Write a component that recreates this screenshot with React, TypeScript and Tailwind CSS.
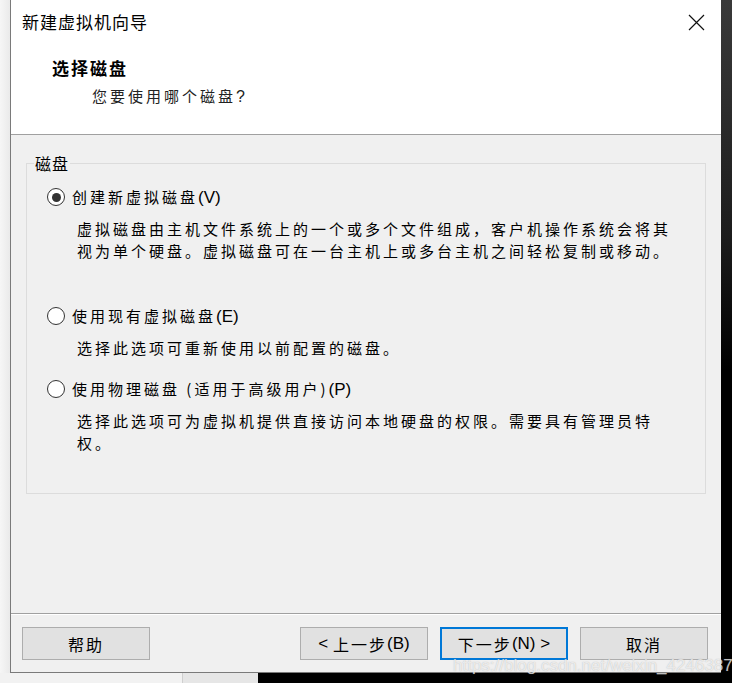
import React from "react";

const cjk = { fontFamily: '"Noto Sans CJK SC", "Noto Sans", sans-serif' };
const latin = { fontFamily: '"Liberation Sans", sans-serif' };

function Radio({ checked }: { checked?: boolean }) {
  return (
    <div className="w-[18px] h-[18px] rounded-full border border-[#333333] bg-white flex items-center justify-center shrink-0">
      {checked && <div className="w-[9px] h-[9px] rounded-full bg-[#333333]" />}
    </div>
  );
}

function Option({ label, hotkey, checked, lines }: { label: string; hotkey: string; checked?: boolean; lines: string[] }) {
  return (
    <div>
      <div className="flex items-center h-[22px] pl-[20px] gap-[7px]">
        <Radio checked={checked} />
        <span className="text-[15px] leading-[22px] tracking-[3px] text-black">
          {label}
          <span className="tracking-[0px] text-[17px]" style={latin}>
            ({hotkey})
          </span>
        </span>
      </div>
      <div className="mt-[10px] pl-[50px] text-[15px] leading-[22px] tracking-[3px] text-black">
        {lines.map((l) => (
          <div key={l} className="whitespace-nowrap">{l}</div>
        ))}
      </div>
    </div>
  );
}

function Btn({ children, primary }: { children: React.ReactNode; primary?: boolean }) {
  return (
    <button
      className={
        "w-[128px] h-[33px] bg-[#e1e1e1] flex items-center justify-center text-[16px] text-black " +
        (primary ? "border-2 border-[#0078d7]" : "border border-[#adadad]")
      }
    >
      {children}
    </button>
  );
}

export default function App() {
  return (
    <div className="relative w-[732px] h-[683px] overflow-hidden flex flex-col bg-[#f0f0f0]" style={cjk}>
      <div className="flex h-[673px]">
        {/* window behind, left edge */}
        <div className="w-[10px] bg-[linear-gradient(90deg,#f6f6f6,#eaeaea)] pt-[304px] text-[15px] text-[#333] overflow-hidden">
          <div className="-ml-[7px]">。</div>
        </div>

        {/* dialog */}
        <div className="w-[711px] flex flex-col border-l border-b border-[#7a7a7a] bg-[#f0f0f0]">
          <div className="h-[135px] bg-white border-b border-[#a0a0a0]">
            <div className="mt-[11px] h-[22px] flex items-center justify-between pl-[11px] pr-[16px]">
              <span className="text-[17px] leading-[22px] tracking-[1px] text-black">新建虚拟机向导</span>
              <svg width="17" height="17" viewBox="0 0 17 17">
                <path d="M1 1L16 16M16 1L1 16" stroke="#111" strokeWidth="1.2" fill="none" />
              </svg>
            </div>
            <div className="mt-[23px] pl-[41px] text-[17px] leading-[24px] tracking-[2px] font-bold text-black">选择磁盘</div>
            <div className="mt-[4px] pl-[81px] text-[15px] leading-[24px] tracking-[3px] text-[#222]">
              您要使用哪个磁盘<span style={latin} className="text-[16px] tracking-[0px]">?</span>
            </div>
          </div>

          <div className="flex-1 flex flex-col">
            <div className="mt-[28px] ml-[15px] w-[680px] h-[331px] border border-[#dcdcdc] relative pt-[22px]">
              <div className="absolute -top-[12px] left-[7px] px-[1px] bg-[#f0f0f0] text-[16px] leading-[22px] tracking-[1px] text-black">
                磁盘
              </div>
              <Option
                checked
                label="创建新虚拟磁盘"
                hotkey="V"
                lines={[
                  "虚拟磁盘由主机文件系统上的一个或多个文件组成，客户机操作系统会将其",
                  "视为单个硬盘。虚拟磁盘可在一台主机上或多台主机之间轻松复制或移动。",
                ]}
              />
              <div className="mt-[43px]">
                <Option label="使用现有虚拟磁盘" hotkey="E" lines={["选择此选项可重新使用以前配置的磁盘。"]} />
              </div>
              <div className="mt-[19px]">
                <Option
                  label="使用物理磁盘 (适用于高级用户)"
                  hotkey="P"
                  lines={["选择此选项可为虚拟机提供直接访问本地硬盘的权限。需要具有管理员特", "权。"]}
                />
              </div>
            </div>

            <div className="mt-auto border-t border-[#a0a0a0] border-b border-b-white" />
            <div className="mt-[12px] mb-[12px] flex items-center pl-[11px] pr-[13px]">
              <Btn>
                <span className="tracking-[2px]">帮助</span>
              </Btn>
              <div className="ml-auto flex gap-[12px]">
                <Btn>
                  <span className="text-[17px]" style={latin}>&lt;&nbsp;</span>
                  <span className="tracking-[2px]">上一步</span>
                  <span className="text-[17px]" style={latin}>(B)</span>
                </Btn>
                <Btn primary>
                  <span className="tracking-[2px]">下一步</span>
                  <span className="text-[17px]" style={latin}>(N)&nbsp;&gt;</span>
                </Btn>
                <Btn>
                  <span className="tracking-[2px]">取消</span>
                </Btn>
              </div>
            </div>
          </div>
        </div>

        {/* desktop right edge */}
        <div className="flex-1 bg-[linear-gradient(#3a3a3a,#1c1c1c_35%,#000_55%)]" />
      </div>

      <div className="flex h-[10px]">
        <div className="w-[183px] bg-[#f2f2f2] border-r border-[#cfcfcf]" />
        <div className="w-[75px] bg-[#e6e6e6]" />
        <div className="flex-1 bg-black" />
      </div>

      <div
        className="absolute left-[453px] top-[653px] text-[17px] whitespace-nowrap text-white/70"
        style={{ ...latin, textShadow: "0 0 1px rgba(120,120,120,0.5)" }}
      >
        https://blog.csdn.net/weixin_42463871
      </div>
    </div>
  );
}
